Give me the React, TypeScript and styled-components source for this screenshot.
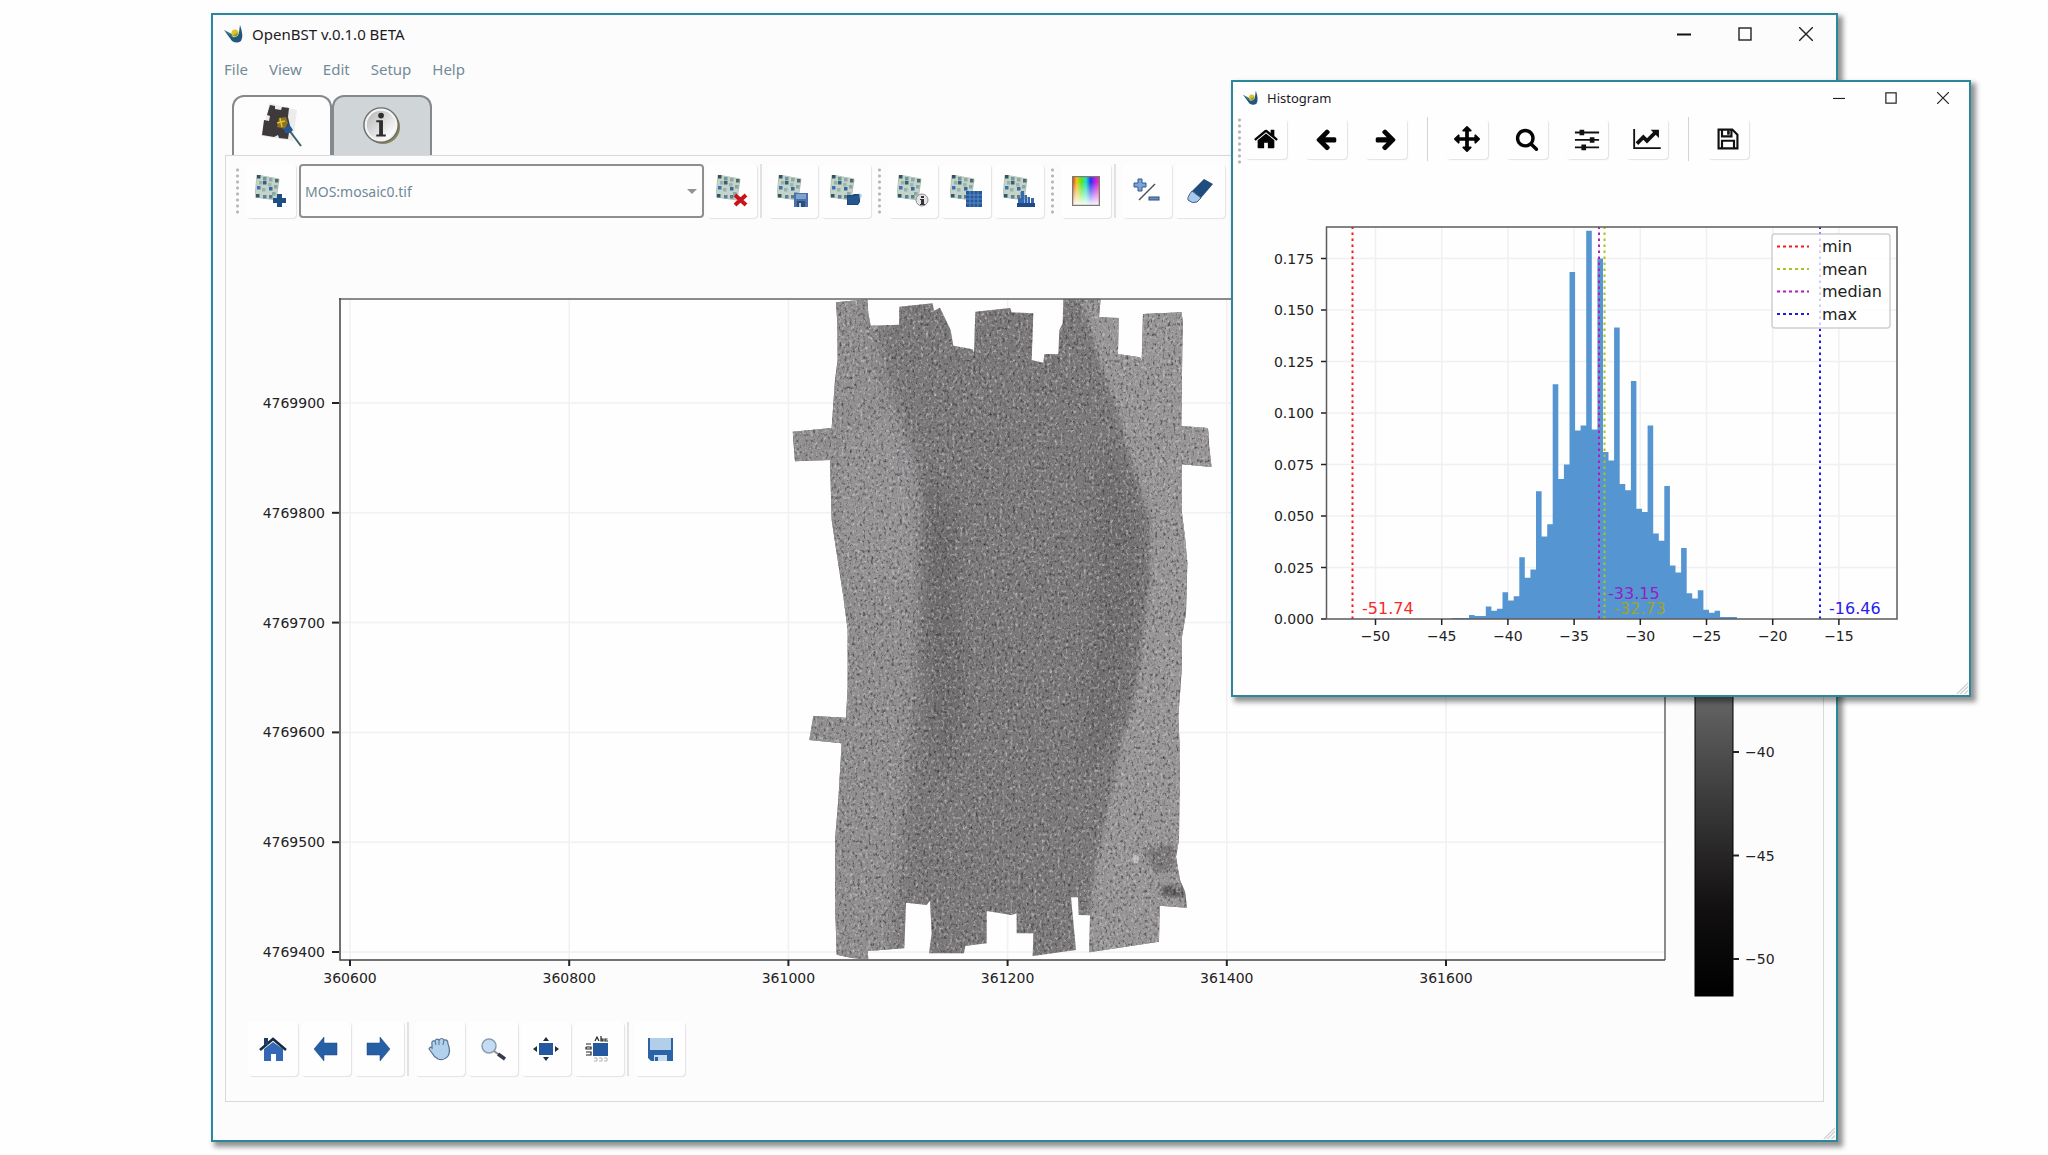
import React from "react";
import styled, { createGlobalStyle, css } from "styled-components";

const UI_FONT = '"Noto Sans", "Open Sans", sans-serif';
const PLOT_FONT = '"DejaVu Sans", sans-serif';

const GlobalStyle = createGlobalStyle`
  *, *::before, *::after { box-sizing: border-box; }
  body { margin: 0; background: #fefefe; font-family: ${UI_FONT}; }
  svg { display: block; }
`;

/* ---------- windows ---------- */

const Desktop = styled.main`
  position: relative;
  min-height: 100vh;
  overflow: hidden;
  background: #fefefe;
`;

const windowFrame = css`
  position: absolute;
  display: flex;
  flex-direction: column;
  border: 2px solid #2c879b;
  box-shadow: 4px 4px 5px 1px rgba(0, 0, 0, 0.42);
`;

const MainWindow = styled.section`
  ${windowFrame}
  top: 13px;
  left: 211px;
  right: 210px;
  background: #fdfcfd;
`;

const HistogramWindow = styled.section`
  ${windowFrame}
  top: 80px;
  left: 1231px;
  width: 740px;
  background: #fefefe;
`;

const TitleBar = styled.header<{ $small?: boolean }>`
  display: flex;
  align-items: center;
  gap: 8px;
  height: ${(p) => (p.$small ? 31 : 38)}px;
  padding-left: ${(p) => (p.$small ? 10 : 11)}px;
`;

const WindowTitle = styled.h1<{ $small?: boolean }>`
  flex: 1;
  margin: 0;
  color: #1c1a1e;
  font-size: ${(p) => (p.$small ? 13 : 15)}px;
  line-height: 20px;
  font-weight: 400;
`;

const WindowControls = styled.div<{ $small?: boolean }>`
  display: flex;
  button { width: ${(p) => (p.$small ? 52 : 61)}px; }
`;

const WindowButton = styled.button`
  display: flex;
  align-items: center;
  justify-content: center;
  height: 28px;
  padding: 0;
  border: 0;
  background: transparent;
`;

const SizeGrip = styled.div`
  position: absolute;
  right: 1px;
  bottom: 1px;
`;

/* ---------- menu and tabs ---------- */

const MenuBar = styled.nav`
  display: flex;
  gap: 21px;
  height: 30px;
  padding: 2px 0 0 11px;
`;

const MenuItem = styled.button`
  padding: 0;
  border: 0;
  background: transparent;
  color: #718b96;
  font-family: ${UI_FONT};
  font-size: 15px;
  line-height: 28px;
`;

const TabStrip = styled.div`
  display: flex;
  padding: 12px 0 0 19px;
`;

const Tab = styled.button<{ $active?: boolean }>`
  display: flex;
  align-items: center;
  justify-content: center;
  width: 100px;
  height: 60px;
  padding: 0;
  border: 2px solid #85898c;
  border-width: 2px 2px 0;
  border-radius: 12px 12px 0 0;
  background: ${(p) => (p.$active ? "#fdfdfd" : "#d0d5d8")};
`;

const TabPanel = styled.section`
  margin: 0 12px;
  border: 1px solid #d9d9dc;
`;

const StatusBar = styled.footer`
  height: 38px;
`;

/* ---------- tool bars ---------- */

const ToolBar = styled.div<{ $bottom?: boolean }>`
  display: flex;
  gap: 3px;
  padding: ${(p) => (p.$bottom ? "18px 22px 25px" : "8px 6px 7px")};
`;

const ToolButton = styled.button`
  display: flex;
  align-items: center;
  justify-content: center;
  flex: none;
  width: 50px;
  height: 54px;
  padding: 0;
  border: 0;
  border-radius: 4px;
  background: #fefefe;
  box-shadow: 1px 1px 1px 0 #e3e1e4;
`;

const Separator = styled.span`
  flex: none;
  width: 5px;
  border-left: 2px solid #e3e1e4;
`;

const Handle = styled.span`
  flex: none;
  width: 11px;
  height: 47px;
  margin-top: 3px;
  background: radial-gradient(circle, #b4b4b8 1px, transparent 2px) center top / 5px 6px repeat-y;
`;

const SelectBox = styled.div`
  position: relative;
  width: 405px;
  svg { position: absolute; right: 7px; top: 24px; pointer-events: none; }
`;

const MosaicSelect = styled.select`
  width: 100%;
  height: 54px;
  padding: 0 24px 0 4px;
  border: 2px solid #8f8f92;
  border-radius: 4px;
  appearance: none;
  background: #fdfdfd;
  color: #6f8995;
  font-family: ${UI_FONT};
  font-size: 14px;
`;

const PlotToolBar = styled.div`
  display: flex;
  gap: 3px;
  height: 51px;
  padding: 4px 0 0 3px;
`;

const PlotHandle = styled(Handle)`
  width: 6px;
  margin: 0;
`;

const PlotTools = styled.div`
  display: flex;
  gap: 18px;
`;

const PlotButton = styled(ToolButton)`
  width: 42px;
  height: 40px;
  margin-top: 2px;
`;

const PlotSeparator = styled.span`
  width: 3px;
  height: 44px;
  border-right: 1px solid #d4d4d6;
`;

const Plot = styled.svg`
  width: 100%;
  height: auto;
  font-family: ${PLOT_FONT};
  font-size: 14px;
`;

/* ---------- drawings ---------- */

const Logo = ({ size }: { size: number }) => (
  <svg width={size} height={size} viewBox="0 0 20 20" aria-hidden="true">
    <path d="M0 6 L9 13 Q14 14 15 8 L16 1 Q20 12 17 17 Q13 20 8 17 Z" fill="#23567c" />
    <path d="M0 6 L8 10 L9 14 Z" fill="#3b7a78" />
    <circle cx="11" cy="9" r="3.500" fill="#e5c02c" />
    <path d="M8 12 L14 8 L13 13 Z" fill="#8fa53a" />
  </svg>
);

const Controls = ({ small }: { small?: boolean }) => {
  const s = small ? 12 : 14;
  return (
    <WindowControls $small={small}>
      <WindowButton aria-label="Minimize">
        <svg width={s} height={s} viewBox="0 0 14 14"><path d="M0 7.500H14" stroke="#111" strokeWidth={small ? 1.2 : 2} /></svg>
      </WindowButton>
      <WindowButton aria-label="Maximize">
        <svg width={s} height={s} viewBox="0 0 14 14"><rect x="1" y="1" width="12" height="12" fill="none" stroke="#222" strokeWidth="1.400" /></svg>
      </WindowButton>
      <WindowButton aria-label="Close">
        <svg width={s} height={s} viewBox="0 0 14 14"><path d="M0 0L14 14M14 0L0 14" stroke="#222" strokeWidth="1.400" /></svg>
      </WindowButton>
    </WindowControls>
  );
};

const Grip = () => (
  <SizeGrip>
    <svg width="12" height="12" viewBox="0 0 14 14" aria-hidden="true">
      <path d="M1 14L14 1M5 14L14 5M10 14L14 10" stroke="#d0d0d2" strokeWidth="1.500" />
    </svg>
  </SizeGrip>
);

const TILES: [number, number, string][] = [
  [2, 0, "#2f5560"], [8, 2, "#6d979c"], [8, 6, "#33617a"], [14, 3, "#8fa9a6"], [20, 4, "#4c6b72"],
  [2, 11, "#3c72b4"], [7, 13, "#96b3b0"], [14, 12, "#346a9e"], [19, 10, "#8ba6a4"], [13, 8, "#9db6b0"],
  [1, 19, "#33586a"], [8, 20, "#5b83a0"], [14, 20, "#5b7f8a"], [4, 6, "#97b1ac"], [17, 17, "#88a8a5"],
];

const Mosaic = ({ children }: { children?: React.ReactNode }) => (
  <svg width="32" height="32" viewBox="0 0 32 32" aria-hidden="true">
    <path d="M2 0L24 4L21 25L0 22Z" fill="#c5d3c9" stroke="#b4c4b9" />
    {TILES.map(([x, y, c]) => <rect key={`${x}-${y}`} x={x} y={y} width="3.500" height="3.500" fill={c} />)}
    {children}
  </svg>
);

const AddMark = () => <path d="M22 19h5v4h4v5h-4v4h-5v-4h-4v-5h4z" fill="#1f4f82" />;
const RemoveMark = () => <path d="M19 20L30 30M30 20L19 30" stroke="#c8141a" strokeWidth="4" />;
const SaveMark = () => (
  <g>
    <rect x="17" y="18" width="14" height="14" fill="#4a72a8" />
    <rect x="19" y="19" width="10" height="5" fill="#7fa3cf" />
    <rect x="20" y="26" width="8" height="6" fill="#2b4c7c" />
    <rect x="22" y="28" width="2" height="4" fill="#b4c9e4" />
  </g>
);
const FolderMark = () => (
  <g>
    <path d="M17 20h5l2-1h6v8l-2 3H17z" fill="#1e4a7a" />
    <path d="M18 22L30 20L28 29H18z" fill="#24568f" />
    <path d="M29 18l3 2-2 5z" fill="#a9cdf0" />
  </g>
);
const InfoMark = () => (
  <g>
    <circle cx="25" cy="25" r="6" fill="#e4e4e6" stroke="#8b8b8e" />
    <path d="M24 21h3v2h-3zM23 24h4v5h1v1h-5v-1h1v-4h-1z" fill="#333" />
  </g>
);
const TableMark = () => (
  <g>
    <rect x="16" y="16" width="16" height="16" fill="#25599a" />
    <path d="M16 20H32M16 24H32M16 28H32M20 16V32M24 16V32M28 16V32" stroke="#5a8ac6" strokeWidth="1" />
  </g>
);
const ChartMark = () => (
  <g>
    <path d="M14 28h18v4H14z" fill="#1f4a85" />
    <path d="M15 28v-5h3v5zM18 28V16h3v12zM21.500 28v-8h2.500v8zM24.500 28v-6h2.500v6zM28 28v-5h3v5z" fill="#3568ae" />
  </g>
);

const ColourIcon = () => (
  <svg width="28" height="30" viewBox="0 0 28 30" aria-hidden="true">
    <defs>
      <linearGradient id="hue">
        {["#e0301c", "#f5c21a", "#58e81c", "#20e0c0", "#2038f0", "#c020e8", "#f04080"].map((c, i) => (
          <stop key={c} offset={i / 6} stopColor={c} />
        ))}
      </linearGradient>
      <linearGradient id="fade" x2="0" y2="1">
        <stop offset="0.2" stopColor="#fff" stopOpacity="0" />
        <stop offset="1" stopColor="#fff" />
      </linearGradient>
    </defs>
    <rect width="28" height="30" fill="url(#hue)" />
    <rect width="28" height="30" fill="url(#fade)" />
    <rect x="0.5" y="0.5" width="27" height="29" fill="none" stroke="#7d7975" strokeWidth="1.500" />
  </svg>
);
const MathIcon = () => (
  <svg width="28" height="26" viewBox="0 0 28 26" aria-hidden="true">
    <path d="M5 1h4v4h4v4H9v4H5V9H1V5h4z" fill="#7ba3d6" stroke="#31598f" />
    <path d="M6 22L22 6" stroke="#4c5158" strokeWidth="1.500" />
    <rect x="16" y="19" width="10" height="3" fill="#6d90c0" stroke="#2d4d7c" />
  </svg>
);
const EraserIcon = () => (
  <svg width="28" height="28" viewBox="0 0 28 28" aria-hidden="true">
    <path d="M18 2L27 7L15 21L6 14Z" fill="#1f4d80" />
    <path d="M6 14L15 21L11 25Q6 27 2 23Q1 20 6 14Z" fill="#a8c9ec" stroke="#3f5f86" />
  </svg>
);

const MosaicTabIcon = () => (
  <svg width="42" height="46" viewBox="0 0 42 46" aria-hidden="true">
    <path d="M8 0L36 7L32 38L0 33L4 20Z" fill="#ececec" />
    <path d="M9 2l5 1 0 3 6 1 1-3 7 1-1 9 2 9-2 13-9-1-1-3-4 2-12-2 2-15 5 1 1-5-3-1z" fill="#3e3a3c" />
    <path d="M18 15l7-1 2 6-3 6-8-2z" fill="#8a7228" />
    <path d="M19 15l2 9M16 20l8-2" stroke="#e3c22c" strokeWidth="1.500" />
    <path d="M23 26l5-5 4 6-3 3-5 0z" fill="#24549a" />
    <path d="M28 27L40 43" stroke="#38616a" strokeWidth="2" />
  </svg>
);
const InfoTabIcon = () => (
  <svg width="40" height="40" viewBox="0 0 42 42" aria-hidden="true">
    <defs>
      <linearGradient id="disc" x2="1" y2="1">
        <stop offset="0.1" stopColor="#bdbdbf" />
        <stop offset="0.9" stopColor="#ffffff" />
      </linearGradient>
    </defs>
    <circle cx="22" cy="22" r="18" fill="#8a8554" />
    <circle cx="20" cy="20" r="18" fill="#f4f4f4" stroke="#6f6f70" strokeWidth="1.500" />
    <circle cx="20" cy="20" r="15" fill="url(#disc)" />
    <circle cx="20" cy="10" r="3" fill="#2d2d2d" />
    <path d="M15 15h7v15h3v2H15v-2h3V17h-3z" fill="#2d2d2d" />
  </svg>
);

const NavIcon = ({ children, size = 28 }: { children: React.ReactNode; size?: number }) => (
  <svg width={size} height={size} viewBox="0 0 28 28" aria-hidden="true">{children}</svg>
);
const BlueHome = () => (
  <NavIcon>
    <path d="M5 14L14 7L24 14V26H17V19H12V26H5Z" fill="#3468b6" />
    <path d="M1 15L14 4L27 15" fill="none" stroke="#14283f" strokeWidth="2.500" />
    <rect x="5" y="3" width="4" height="7" fill="#1c3d66" />
  </NavIcon>
);
const BlueBack = () => <NavIcon><path d="M2 14L12 2V8H25V20H12V26Z" fill="#265fa5" stroke="#1e4678" strokeWidth="0.500" /></NavIcon>;
const BlueForward = () => <NavIcon><path d="M25 14L15 2V8H2V20H15V26Z" fill="#265fa5" stroke="#1e4678" strokeWidth="0.500" /></NavIcon>;
const Hand = () => (
  <NavIcon>
    <path d="M6 10Q5 5 9 6Q10 3 13 5Q16 2 18 5Q22 4 22 9Q25 16 22 21Q18 26 12 24Q8 22 6 18L3 14Q4 11 6 13Z" fill="#b1d2ef" stroke="#56728d" strokeWidth="1.200" />
    <path d="M9 6L10 10M13 5V10M18 5L17 10" stroke="#56728d" />
  </NavIcon>
);
const Magnifier = () => (
  <NavIcon>
    <circle cx="10" cy="11" r="7" fill="#c3dcf3" stroke="#8b9cae" strokeWidth="1.500" />
    <path d="M15 16L19 19" stroke="#8b8b90" strokeWidth="2" />
    <path d="M19 19L26 24" stroke="#333b4b" strokeWidth="3.500" />
  </NavIcon>
);
const MoveBlue = () => (
  <NavIcon>
    <rect x="7" y="8" width="14" height="12" fill="#24599f" />
    <path d="M14 2l3 4h-6zM14 26l3-4h-6zM1 14l4-3v6zM27 14l-4-3v6z" fill="#1f2e40" />
  </NavIcon>
);
const LabelsIcon = () => (
  <NavIcon>
    <rect x="8" y="8" width="15" height="13" fill="#24599f" />
    <path d="M10 6l2-4 2 4M16 1v5h2V4h-2M22.500 4H20v2h3" fill="none" stroke="#222" strokeWidth="1.200" />
    <path d="M1 9h5M1 12h5v2H1v-2M1 17h5v3H1" fill="none" stroke="#222" strokeWidth="1.200" />
    <path d="M9 23h3v3H9M14 23h3v3h-3M19 23h3v3h-3" fill="none" stroke="#b3b3b3" />
  </NavIcon>
);
const BlueSave = () => (
  <NavIcon>
    <path d="M2 3H27V26H5L2 23Z" fill="#2c62a8" />
    <rect x="4" y="3" width="21" height="12" fill="#b1cfe9" />
    <rect x="8" y="20" width="13" height="6" fill="#c6dcf0" />
    <rect x="9" y="22" width="3" height="4" fill="#2c62a8" />
  </NavIcon>
);

const Glyph = ({ d, flip, size = 24 }: { d: string; flip?: boolean; size?: number }) => (
  <svg width={size} height={size} viewBox="0 0 1792 1792" aria-hidden="true">
    <path d={d} fill="#050505" transform={flip ? "translate(1792 0) scale(-1 1)" : undefined} />
  </svg>
);
const HOME = "M1472 992v480q0 26-19 45t-45 19h-384v-384h-256v384h-384q-26 0-45-19t-19-45v-480q0-1 .5-3t.5-3l575-474 575 474q1 2 1 6zm223-69l-62 74q-8 9-21 11h-3q-13 0-21-7l-692-577-692 577q-12 8-24 7-13-2-21-11l-62-74q-8-10-7-23.500t11-21.500l719-599q32-26 76-26t76 26l244 204v-195q0-14 9-23t23-9h192q14 0 23 9t9 23v408l219 182q10 8 11 21.500t-7 23.500z";
const ARROW = "M1664 896v128q0 53-32.500 90.500t-84.500 37.500h-704l293 294q38 36 38 90t-38 90l-75 76q-37 37-90 37-52 0-91-37l-651-652q-37-37-37-90 0-52 37-91l651-650q38-38 91-38 52 0 90 38l75 74q38 38 38 91t-38 91l-293 293h704q52 0 84.500 37.500t32.500 90.500z";
const MOVE = "M1792 896q0 26-19 45l-256 256q-19 19-45 19t-45-19-19-45v-128h-384v384h128q26 0 45 19t19 45-19 45l-256 256q-19 19-45 19t-45-19l-256-256q-19-19-19-45t19-45 45-19h128v-384h-384v128q0 26-19 45t-45 19-45-19l-256-256q-19-19-19-45t19-45l256-256q19-19 45-19t45 19 19 45v128h384v-384h-128q-26 0-45-19t-19-45 19-45l256-256q19-19 45-19t45 19l256 256q19 19 19 45t-19 45-45 19h-128v384h384v-128q0-26 19-45t45-19 45 19l256 256q19 19 19 45z";
const SEARCH = "M1216 832q0-185-131.500-316.500t-316.500-131.500-316.500 131.500-131.500 316.500 131.500 316.500 316.500 131.500 316.500-131.500 131.500-316.500zm512 832q0 52-38 90t-90 38q-54 0-90-38l-343-342q-179 124-399 124-143 0-273.500-55.500t-225-150-150-225-55.500-273.500 55.500-273.500 150-225 225-150 273.500-55.500 273.500 55.500 225 150 150 225 55.500 273.500q0 220-124 399l343 343q37 37 37 90z";

const Sliders = () => (
  <NavIcon size={26}>
    <path d="M1 7H27M1 15H27M1 23H27" stroke="#111" strokeWidth="2" />
    <path d="M6 4h5v6H6zM17 12h5v6h-5zM8 20h5v6H8z" fill="#111" />
  </NavIcon>
);
const LineChart = () => (
  <svg width="28" height="22" viewBox="0 0 30 24" aria-hidden="true">
    <path d="M1 1V22H30" fill="none" stroke="#111" strokeWidth="2" />
    <path d="M4 17L11 10L15 14L24 5" fill="none" stroke="#111" strokeWidth="4" />
    <path d="M19 2H28V11Z" fill="#111" />
  </svg>
);
const Floppy = () => (
  <NavIcon size={24}>
    <path d="M3 3H19L25 9V25H3Z" fill="none" stroke="#111" strokeWidth="2.500" />
    <path d="M7 3V11H18V3M7 25V16H21V25" fill="none" stroke="#111" strokeWidth="2.500" />
    <rect x="13" y="4" width="3" height="5" fill="#111" />
  </NavIcon>
);

/* ---------- mosaic map ---------- */

const EAST = [360600, 360800, 361000, 361200, 361400, 361600];
const NORTH = [4769900, 4769800, 4769700, 4769600, 4769500, 4769400];
const eastX = (v: number) => 350 + (v - 360600) * 1.096;
const northY = (v: number) => 403 + (4769900 - v) * 1.098;

/* Survey outline, three units to a pixel. */
const OUTLINE =
  "168,67 262,58 265,100 272,137 357,134 358,80 458,70 462,92 480,83 512,150 520,197 578,208 582,218 586,95 690,84 695,97 760,100 755,240 790,248 793,223 835,222 838,150 848,130 850,56 962,56 957,112 1016,114 1014,222 1080,232 1085,243 1089,102 1205,97 1208,125 1204,438 1284,444 1288,505 1295,561 1206,553 1206,700 1216,780 1222,850 1218,1000 1206,1070 1205,1170 1195,1310 1200,1420 1198,1580 1197,1680 1188,1730 1200,1800 1215,1835 1221,1883 1139,1877 1137,1985 928,2017 930,1906 896,1905 894,1852 873,1852 888,2010 758,2028 760,1960 710,1960 710,1900 695,1905 620,1893 620,1990 556,1998 552,2020 447,2020 455,1960 450,1862 440,1875 378,1868 373,2005 263,2013 265,2038 215,2034 170,2024 165,1860 165,1680 175,1560 185,1390 88,1380 100,1308 198,1313 203,1220 203,1050 190,950 170,820 155,720 150,540 45,544 38,455 155,444 165,300 173,240 172,130";

const MosaicMap = () => (
  <Plot viewBox="226 225 1597 779" role="img" aria-label="Backscatter mosaic">
    <defs>
      <clipPath id="survey"><polygon points={OUTLINE} /></clipPath>
      <clipPath id="surveyPx">
        <polygon points={OUTLINE} transform="translate(780 280) scale(0.333333)" />
      </clipPath>
      <filter id="dark" x="0" y="0" width="100%" height="100%" colorInterpolationFilters="sRGB">
        <feTurbulence type="fractalNoise" baseFrequency="0.38 0.3" numOctaves="3" seed="4" />
        <feColorMatrix values="0 0 0 0 0.16  0 0 0 0 0.15  0 0 0 0 0.16  2 0 0 0 -1.04" />
      </filter>
      <filter id="light" x="0" y="0" width="100%" height="100%" colorInterpolationFilters="sRGB">
        <feTurbulence type="fractalNoise" baseFrequency="0.38 0.3" numOctaves="3" seed="19" />
        <feColorMatrix values="0 0 0 0 0.85  0 0 0 0 0.84  0 0 0 0 0.85  0 1.9 0 0 -1" />
      </filter>
      <filter id="soft" x="-30%" y="-10%" width="160%" height="120%"><feGaussianBlur stdDeviation="22" /></filter>
      <filter id="edge" x="-30%" y="-10%" width="160%" height="120%"><feGaussianBlur stdDeviation="7" /></filter>
      <linearGradient id="bar" x2="0" y2="1">
        <stop offset="0" stopColor="#ffffff" />
        <stop offset="0.6" stopColor="#626262" />
        <stop offset="0.88" stopColor="#121011" />
        <stop offset="1" stopColor="#000000" />
      </linearGradient>
    </defs>
    <rect x="339" y="299" width="1326" height="661" fill="#fefefe" />
    {EAST.map((v) => <path key={v} d={`M${eastX(v)} 299V960`} stroke="#f2f0f2" strokeWidth="1.500" />)}
    {NORTH.map((v) => <path key={v} d={`M339 ${northY(v)}H1665`} stroke="#f2f0f2" strokeWidth="1.500" />)}
    <g transform="translate(780 280) scale(0.333333)">
      <g clipPath="url(#survey)">
        <rect x="30" y="50" width="1270" height="2000" fill="#7b797a" />
        <polygon filter="url(#soft)" fill="#918f90" points="-60,0 270,0 320,300 390,500 425,680 430,1000 400,1300 370,1600 330,2100 -60,2100" />
        <polygon filter="url(#edge)" fill="#989697" points="910,80 960,250 1010,380 1045,520 1110,720 1110,900 1090,1050 1065,1250 1020,1400 980,1600 940,1800 905,2100 1340,2100 1340,0 910,0" />
        <polygon filter="url(#edge)" fill="#9c9a9b" points="200,480 350,400 400,520 430,690 400,900 220,900 170,640" opacity="0.4" />
        <polygon filter="url(#soft)" fill="#6a6869" points="440,560 520,700 550,1300 480,1500 430,1100" opacity="0.7" />
        <polygon filter="url(#soft)" fill="#6c6a6b" points="960,500 1050,600 1080,900 1000,1350 900,1500 940,1000" opacity="0.6" />
        <polygon filter="url(#edge)" fill="#5f5d5e" points="1090,1710 1180,1690 1190,1760 1130,1780" opacity="0.5" />
        <circle cx="1066" cy="1738" r="12" fill="#cfcfcf" opacity="0.7" />
        <path filter="url(#edge)" d="M1142 1825L1150 1850L1216 1850L1212 1828L1160 1815Z" fill="#4e4c4d" opacity="0.8" />
      </g>
    </g>
    <g clipPath="url(#surveyPx)">
      <rect x="790" y="296" width="425" height="666" filter="url(#dark)" />
      <rect x="790" y="296" width="425" height="666" filter="url(#light)" />
    </g>
    <path d="M339 299H1665V960" fill="none" stroke="#666" strokeWidth="1.500" />
    <path d="M340 298V960H1665" fill="none" stroke="#444" strokeWidth="1.500" />
    {EAST.map((v) => (
      <g key={v}>
        <path d={`M${eastX(v)} 960v6`} stroke="#222" strokeWidth="2" />
        <text x={eastX(v)} y="983" textAnchor="middle" fill="#222">{v}</text>
      </g>
    ))}
    {NORTH.map((v) => (
      <g key={v}>
        <path d={`M332 ${northY(v)}h7`} stroke="#222" strokeWidth="2" />
        <text x="325" y={northY(v) + 5} textAnchor="end" fill="#222">{v}</text>
      </g>
    ))}
    <rect x="1695" y="262" width="38" height="734" fill="url(#bar)" stroke="#000" />
    {[-40, -45, -50].map((v) => {
      const y = 752 - (v + 40) * 20.7;
      return (
        <g key={v}>
          <path d={`M1733 ${y}h6`} stroke="#222" strokeWidth="2" />
          <text x="1745" y={y + 5} fill="#222">{`−${-v}`}</text>
        </g>
      );
    })}
  </Plot>
);

/* ---------- histogram ---------- */

const DENSITY = [
  0.0005, 0.0005, 0.0005, 0.002, 0.0015, 0.0015, 0.006, 0.004, 0.005, 0.013, 0.009, 0.011, 0.030, 0.020, 0.024,
  0.062, 0.040, 0.046, 0.114, 0.068, 0.075, 0.1685, 0.0915, 0.094, 0.1885, 0.092, 0.175, 0.081, 0.077, 0.1415,
  0.0655, 0.0625, 0.1155, 0.0535, 0.052, 0.094, 0.0415, 0.038, 0.0645, 0.026, 0.0225, 0.0345, 0.0125, 0.010,
  0.014, 0.0045, 0.003, 0.004, 0.001, 0.001, 0.001,
];
const dbX = (v: number) => 1375.5 + (v + 50) * 13.24;
const densityY = (d: number) => 619 - d * 2060;
const BIN = 5.58;
const barPath = () => {
  let d = "M1452.300 619";
  DENSITY.forEach((v, i) => { d += `V${densityY(v).toFixed(1)}H${(1452.3 + BIN * (i + 1)).toFixed(1)}`; });
  return `${d}V619Z`;
};
const STATS = [
  { name: "min", x: 1352.5, colour: "#f01c1c" },
  { name: "mean", x: 1604.5, colour: "#b0c01c" },
  { name: "median", x: 1599, colour: "#b418c0" },
  { name: "max", x: 1820, colour: "#2018e8" },
];
const DB_TICKS = [-50, -45, -40, -35, -30, -25, -20, -15];
const DENSITY_TICKS = [0, 0.025, 0.05, 0.075, 0.1, 0.125, 0.15, 0.175];

const Histogram = () => (
  <Plot viewBox="1233 164 736 531" role="img" aria-label="Histogram of backscatter values">
    {DB_TICKS.map((v) => <path key={v} d={`M${dbX(v)} 227V619`} stroke="#f1eff2" strokeWidth="1.500" />)}
    {DENSITY_TICKS.map((v) => <path key={v} d={`M1326 ${densityY(v)}H1897`} stroke="#f1eff2" strokeWidth="1.500" />)}
    <path d={barPath()} fill="#5596d2" />
    {STATS.map((s) => (
      <path key={s.name} d={`M${s.x} 619V227`} stroke={s.colour} strokeWidth="2" strokeDasharray="2.500 3.500" />
    ))}
    <g fontSize="16">
      <text x="1362" y="614" fill="#f42a2a">-51.74</text>
      <text x="1614" y="614" fill="#a0a42c">-32.73</text>
      <text x="1608" y="599" fill="#9420c4">-33.15</text>
      <text x="1829" y="614" fill="#2a20e8">-16.46</text>
    </g>
    <rect x="1326.500" y="227" width="570.500" height="392" fill="none" stroke="#5c5c5e" strokeWidth="1.500" />
    {DB_TICKS.map((v) => (
      <g key={v}>
        <path d={`M${dbX(v)} 619v6`} stroke="#222" strokeWidth="1.500" />
        <text x={dbX(v)} y="641" textAnchor="middle" fill="#222">{`−${-v}`}</text>
      </g>
    ))}
    {DENSITY_TICKS.map((v) => (
      <g key={v}>
        <path d={`M1321 ${densityY(v)}h5`} stroke="#222" strokeWidth="1.500" />
        <text x="1314" y={densityY(v) + 5} textAnchor="end" fill="#222">{v.toFixed(3)}</text>
      </g>
    ))}
    <rect x="1772" y="234" width="118" height="94" rx="3" fill="#ffffff" fillOpacity="0.8" stroke="#d0d0d2" strokeWidth="1.500" />
    {STATS.map((s, i) => (
      <g key={s.name}>
        <path d={`M1777 ${246.5 + i * 22.5}h32`} stroke={s.colour} strokeWidth="2" strokeDasharray="3 3" />
        <text x="1822" y={252 + i * 22.5} fontSize="16" fill="#222">{s.name}</text>
      </g>
    ))}
  </Plot>
);

/* ---------- page ---------- */

export default function App() {
  return (
    <Desktop>
      <GlobalStyle />
      <MainWindow>
        <TitleBar>
          <Logo size={20} />
          <WindowTitle>OpenBST v.0.1.0 BETA</WindowTitle>
          <Controls />
        </TitleBar>
        <MenuBar>
          {["File", "View", "Edit", "Setup", "Help"].map((m) => <MenuItem key={m}>{m}</MenuItem>)}
        </MenuBar>
        <TabStrip role="tablist">
          <Tab $active role="tab" aria-selected="true" aria-label="Mosaic"><MosaicTabIcon /></Tab>
          <Tab role="tab" aria-selected="false" aria-label="Info"><InfoTabIcon /></Tab>
        </TabStrip>
        <TabPanel role="tabpanel">
          <ToolBar>
            <Handle />
            <ToolButton aria-label="Add mosaic"><Mosaic><AddMark /></Mosaic></ToolButton>
            <SelectBox>
              <MosaicSelect aria-label="Mosaic" defaultValue="mosaic0">
                <option value="mosaic0">MOS:mosaic0.tif</option>
              </MosaicSelect>
              <svg width="10" height="6" viewBox="0 0 10 6" aria-hidden="true"><path d="M0 1h10L5 6z" fill="#929295" /></svg>
            </SelectBox>
            <ToolButton aria-label="Remove mosaic"><Mosaic><RemoveMark /></Mosaic></ToolButton>
            <Separator />
            <ToolButton aria-label="Save mosaic"><Mosaic><SaveMark /></Mosaic></ToolButton>
            <ToolButton aria-label="Open folder"><Mosaic><FolderMark /></Mosaic></ToolButton>
            <Handle />
            <ToolButton aria-label="Mosaic info"><Mosaic><InfoMark /></Mosaic></ToolButton>
            <ToolButton aria-label="Mosaic values"><Mosaic><TableMark /></Mosaic></ToolButton>
            <ToolButton aria-label="Mosaic histogram"><Mosaic><ChartMark /></Mosaic></ToolButton>
            <Handle />
            <ToolButton aria-label="Colours"><ColourIcon /></ToolButton>
            <Separator />
            <ToolButton aria-label="Calculator"><MathIcon /></ToolButton>
            <ToolButton aria-label="Eraser"><EraserIcon /></ToolButton>
          </ToolBar>
          <MosaicMap />
          <ToolBar $bottom>
            <ToolButton aria-label="Home"><BlueHome /></ToolButton>
            <ToolButton aria-label="Back"><BlueBack /></ToolButton>
            <ToolButton aria-label="Forward"><BlueForward /></ToolButton>
            <Separator />
            <ToolButton aria-label="Pan"><Hand /></ToolButton>
            <ToolButton aria-label="Zoom"><Magnifier /></ToolButton>
            <ToolButton aria-label="Full extent"><MoveBlue /></ToolButton>
            <ToolButton aria-label="Labels"><LabelsIcon /></ToolButton>
            <Separator />
            <ToolButton aria-label="Save"><BlueSave /></ToolButton>
          </ToolBar>
        </TabPanel>
        <StatusBar />
        <Grip />
      </MainWindow>

      <HistogramWindow>
        <TitleBar $small>
          <Logo size={16} />
          <WindowTitle $small>Histogram</WindowTitle>
          <Controls small />
        </TitleBar>
        <PlotToolBar>
          <PlotHandle />
          <PlotTools>
            <PlotButton aria-label="Reset view"><Glyph d={HOME} size={26} /></PlotButton>
            <PlotButton aria-label="Previous view"><Glyph d={ARROW} /></PlotButton>
            <PlotButton aria-label="Next view"><Glyph d={ARROW} flip /></PlotButton>
            <PlotSeparator />
            <PlotButton aria-label="Pan plot"><Glyph d={MOVE} size={26} /></PlotButton>
            <PlotButton aria-label="Zoom plot"><Glyph d={SEARCH} /></PlotButton>
            <PlotButton aria-label="Configure subplots"><Sliders /></PlotButton>
            <PlotButton aria-label="Edit axes"><LineChart /></PlotButton>
            <PlotSeparator />
            <PlotButton aria-label="Save figure"><Floppy /></PlotButton>
          </PlotTools>
        </PlotToolBar>
        <Histogram />
        <Grip />
      </HistogramWindow>
    </Desktop>
  );
}
